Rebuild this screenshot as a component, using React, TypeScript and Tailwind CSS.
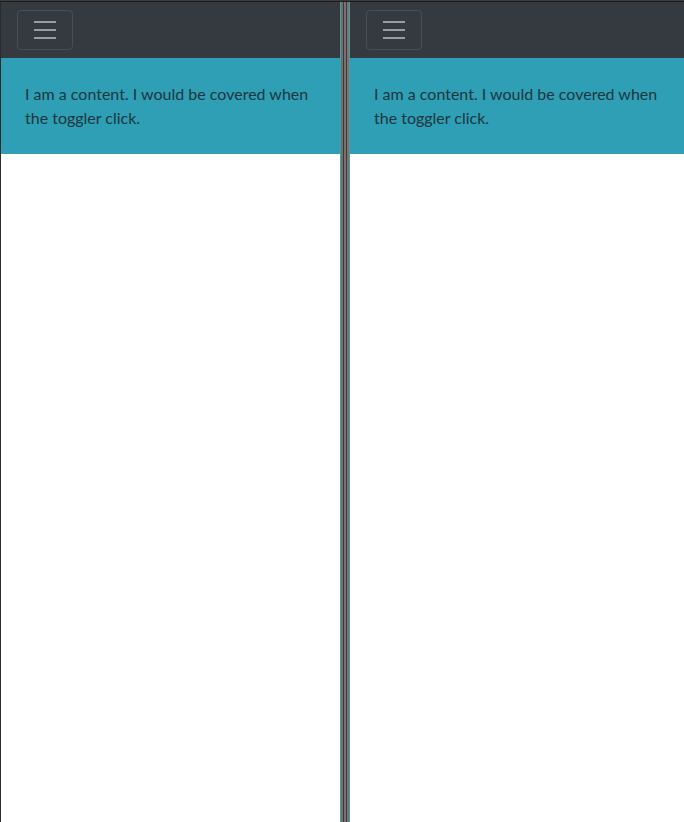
import React from 'react'

function Toggler() {
  return (
    <button className="flex h-10 w-14 items-center justify-center rounded border border-white/10">
      <svg width="30" height="30" viewBox="0 0 30 30">
        <path d="M4 7h22M4 15h22M4 23h22" stroke="rgba(255,255,255,0.5)" strokeWidth="2" strokeLinecap="butt" />
      </svg>
    </button>
  )
}

function Pane({ className = '' }: { className?: string }) {
  return (
    <div className={`flex flex-col bg-white ${className}`}>
      <nav className="flex h-14 items-center bg-[#343a40] px-4">
        <Toggler />
      </nav>
      <div className="bg-[#2e9fb4] p-6 text-base leading-6 text-[#1f3640]">
        I am a content. I would be covered when the toggler click.
      </div>
    </div>
  )
}

export default function App() {
  return (
    <div
      className="flex h-[822px] w-[684px] flex-col bg-white"
      style={{ fontFamily: 'Lato, "Noto Sans", sans-serif' }}
    >
      <div className="h-px bg-[#3c3c3c]" />
      <div className="h-px bg-[#1e1e1e]" />
      <div className="flex flex-1">
        <div className="w-px bg-[#2b2b2b]" />
        <Pane className="w-[339px]" />
        {/* splitter */}
        <div className="flex w-[10px]">
          <div className="w-px bg-[#4e9a98]" />
          <div className="w-[2px] bg-[#6e6e6e]" />
          <div className="w-px bg-[#3a3a3a]" />
          <div className="w-[2px] bg-[#7d6e72]" />
          <div className="w-px bg-[#3a3a3a]" />
          <div className="w-[2px] bg-[#767676]" />
          <div className="w-px bg-[#4e9a98]" />
        </div>
        <Pane className="flex-1" />
      </div>
    </div>
  )
}
